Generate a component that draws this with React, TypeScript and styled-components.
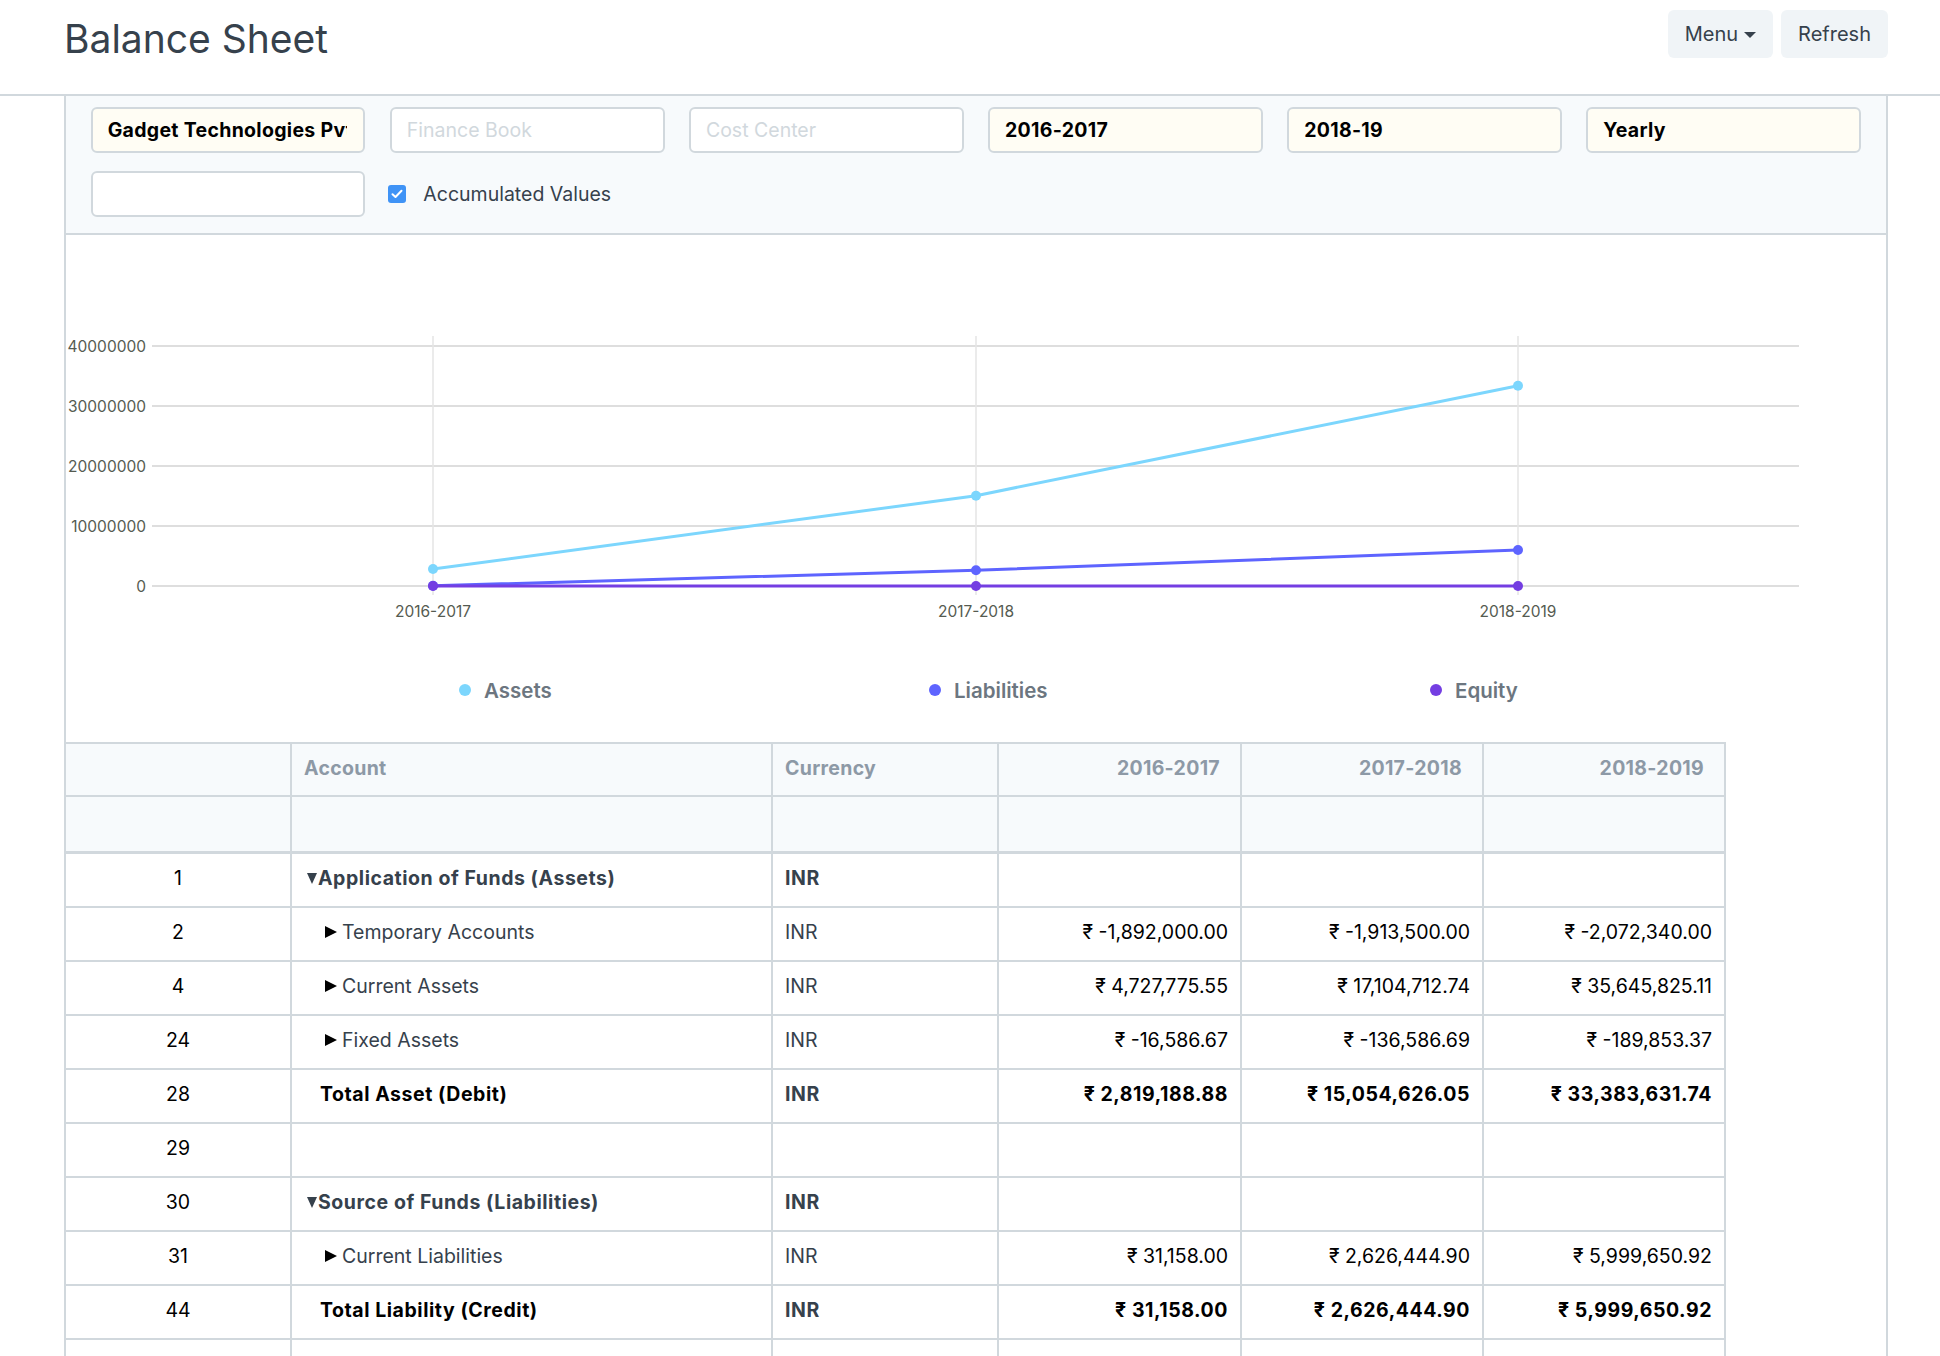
import React from "react";
import styled, { createGlobalStyle } from "styled-components";

const GlobalStyle = createGlobalStyle`
  html, body { margin: 0; padding: 0; background: #ffffff; overflow: hidden; }
  body { font-family: Inter, "Noto Sans", "DejaVu Sans", sans-serif; color: #36414c; }
  * { box-sizing: border-box; }
`;

const Page = styled.div`
  width: 1940px;
`;

const PageHead = styled.header`
  height: 96px;
  border-bottom: 2px solid #d1d8dd;
`;

const HeadInner = styled.div`
  margin-left: 64px;
  width: 1824px;
  display: flex;
  justify-content: space-between;
  align-items: flex-start;
`;

const Title = styled.h1`
  margin: 14.5px 0 0 0;
  font-size: 39px;
  line-height: 48px;
  font-weight: 400;
  color: #36414c;
`;

const Actions = styled.div`
  display: flex;
  gap: 8px;
  margin-top: 10px;
`;

const Button = styled.button`
  height: 48px;
  padding: 0 17px;
  border: none;
  border-radius: 6px;
  background: #f0f4f7;
  color: #36414c;
  font-family: Inter, "Noto Sans", sans-serif;
  font-size: 20px;
  display: inline-flex;
  align-items: center;
  gap: 6px;
`;

const Caret = styled.span`
  width: 0;
  height: 0;
  border-left: 6.5px solid transparent;
  border-right: 6.5px solid transparent;
  border-top: 6px solid #36414c;
  margin-top: 2px;
`;

const Main = styled.main`
  margin-left: 64px;
  width: 1824px;
  min-height: 1400px;
  border-left: 2px solid #d1d8dd;
  border-right: 2px solid #d1d8dd;
`;

const FilterArea = styled.section`
  background: #f7fafc;
  border-bottom: 2px solid #d1d8dd;
  padding: 11px 25px 16px 24.7px;
  display: grid;
  grid-template-columns: repeat(6, 1fr);
  column-gap: 24.4px;
  row-gap: 18px;
`;

const Input = styled.input<{ $filled?: boolean }>`
  width: 100%;
  height: 46px;
  border: 2px solid #d1d8dd;
  border-radius: 6px;
  background: ${(p) => (p.$filled ? "#fffdf4" : "#ffffff")};
  padding: 0 16px 0 15px;
  font-family: Inter, "Noto Sans", sans-serif;
  font-size: 19.5px;
  font-weight: 700;
  letter-spacing: 0.3px;
  color: #000000;
  outline: none;
  &::placeholder {
    color: #d1d8dd;
    font-weight: 400;
    letter-spacing: 0;
  }
`;

const CheckField = styled.label`
  display: flex;
  align-items: center;
  gap: 17px;
  margin-left: -1.5px;
  font-size: 19.5px;
  color: #36414c;
`;

const CheckBox = styled.span`
  width: 18px;
  height: 18px;
  border-radius: 3px;
  background: #3f93f6;
  display: inline-flex;
  align-items: center;
  justify-content: center;
`;

const ChartSection = styled.section`
  height: 507px;
`;

const ChartSvg = styled.svg`
  display: block;
  overflow: visible;
`;

const AxisText = styled.text`
  font-family: Inter, "Noto Sans", sans-serif;
  font-size: 15.5px;
  fill: #555b51;
`;

const LegendText = styled.text`
  font-family: Inter, "Noto Sans", sans-serif;
  font-size: 20.5px;
  font-weight: 600;
  fill: #6c7680;
`;

const Table = styled.div`
  width: 1660px;
  border-top: 2px solid #d1d8dd;
`;

const Row = styled.div<{ $head?: boolean; $filter?: boolean }>`
  display: grid;
  grid-template-columns: 226px 481px 226px 243px 242px 242px;
  height: ${(p) => (p.$head ? "53px" : p.$filter ? "57px" : "54px")};
  background: ${(p) => (p.$head || p.$filter ? "#f7fafc" : "#ffffff")};
  border-bottom: ${(p) => (p.$filter ? "3px" : "2px")} solid #d1d8dd;
`;

const Cell = styled.div<{ $align?: "left" | "right" | "center"; $bold?: boolean; $dark?: boolean; $head?: boolean }>`
  border-right: 2px solid #d1d8dd;
  display: flex;
  align-items: center;
  justify-content: ${(p) => (p.$align === "right" ? "flex-end" : p.$align === "center" ? "center" : "flex-start")};
  padding: ${(p) => (p.$head && p.$align === "right" ? "0 20px 4px 12px" : "0 12px 4px 12px")};
  font-size: 19.5px;
  font-weight: ${(p) => (p.$bold || p.$head ? 700 : 400)};
  letter-spacing: ${(p) => (p.$bold ? "0.55px" : p.$head ? "0.3px" : "0")};
  color: ${(p) => (p.$head ? "#8d99a6" : p.$dark ? "#000000" : "#36414c")};
  white-space: nowrap;
  overflow: hidden;
`;

const AccountText = styled.span<{ $indent: number }>`
  display: inline-flex;
  align-items: center;
  margin-left: ${(p) => p.$indent}px;
`;

const ToggleDown = styled.span`
  width: 0;
  height: 0;
  border-left: 5px solid transparent;
  border-right: 5px solid transparent;
  border-top: 11px solid #36414c;
  margin: 0 1px 0 3px;
`;

const ToggleRight = styled.span`
  width: 0;
  height: 0;
  border-top: 6.5px solid transparent;
  border-bottom: 6.5px solid transparent;
  border-left: 12px solid #000000;
  margin: 0 5px 0 5px;
`;

type Line = {
  idx: number;
  name: string;
  level: number;
  toggle?: "open" | "closed";
  total?: boolean;
  currency?: string;
  values?: string[];
};

const ROWS: Line[] = [
  { idx: 1, name: "Application of Funds (Assets)", level: 0, toggle: "open", currency: "INR" },
  { idx: 2, name: "Temporary Accounts", level: 1, toggle: "closed", currency: "INR", values: ["₹ -1,892,000.00", "₹ -1,913,500.00", "₹ -2,072,340.00"] },
  { idx: 4, name: "Current Assets", level: 1, toggle: "closed", currency: "INR", values: ["₹ 4,727,775.55", "₹ 17,104,712.74", "₹ 35,645,825.11"] },
  { idx: 24, name: "Fixed Assets", level: 1, toggle: "closed", currency: "INR", values: ["₹ -16,586.67", "₹ -136,586.69", "₹ -189,853.37"] },
  { idx: 28, name: "Total Asset (Debit)", level: 1, total: true, currency: "INR", values: ["₹ 2,819,188.88", "₹ 15,054,626.05", "₹ 33,383,631.74"] },
  { idx: 29, name: "", level: 0 },
  { idx: 30, name: "Source of Funds (Liabilities)", level: 0, toggle: "open", currency: "INR" },
  { idx: 31, name: "Current Liabilities", level: 1, toggle: "closed", currency: "INR", values: ["₹ 31,158.00", "₹ 2,626,444.90", "₹ 5,999,650.92"] },
  { idx: 44, name: "Total Liability (Credit)", level: 1, total: true, currency: "INR", values: ["₹ 31,158.00", "₹ 2,626,444.90", "₹ 5,999,650.92"] },
  { idx: 45, name: "", level: 0 },
  { idx: 46, name: "Source of Funds (Equity)", level: 0, toggle: "open", currency: "INR" },
];

const PERIODS = ["2016-2017", "2017-2018", "2018-2019"];
const XS = [367, 910, 1452];
const yFor = (v: number) => 351 - (v / 1e7) * 60;

const SERIES = [
  { name: "Assets", color: "#7cd6fd", values: [2819188.88, 15054626.05, 33383631.74], lx: 399 },
  { name: "Liabilities", color: "#5e64ff", values: [31158, 2626444.9, 5999650.92], lx: 869 },
  { name: "Equity", color: "#743ee2", values: [0, 0, 0], lx: 1370 },
];

const Chart: React.FC = () => (
  <ChartSvg width={1820} height={507} viewBox="0 0 1820 507">
    {[40000000, 30000000, 20000000, 10000000, 0].map((t) => (
      <g key={t}>
        <line x1={86} x2={1733} y1={yFor(t)} y2={yFor(t)} stroke="#dedede" strokeWidth={2} />
        <AxisText x={80} y={yFor(t) + 5.5} textAnchor="end">
          {t}
        </AxisText>
      </g>
    ))}
    {XS.map((x, i) => (
      <g key={x}>
        <line x1={x} x2={x} y1={101} y2={360} stroke="#e4e4e4" strokeWidth={1.5} />
        <AxisText x={x} y={382} textAnchor="middle">
          {PERIODS[i]}
        </AxisText>
      </g>
    ))}
    {SERIES.map((s) => (
      <g key={s.name}>
        <polyline
          points={s.values.map((v, i) => `${XS[i]},${yFor(v)}`).join(" ")}
          fill="none"
          stroke={s.color}
          strokeWidth={3}
        />
        {s.values.map((v, i) => (
          <circle key={i} cx={XS[i]} cy={yFor(v)} r={5} fill={s.color} />
        ))}
      </g>
    ))}
    {SERIES.map((s) => (
      <g key={s.name + "-legend"}>
        <circle cx={s.lx} cy={455} r={6} fill={s.color} />
        <LegendText x={s.lx + 19} y={462.5}>
          {s.name}
        </LegendText>
      </g>
    ))}
  </ChartSvg>
);

const Check = () => (
  <svg width="12" height="10" viewBox="0 0 12 10">
    <path d="M1.5 5.2 L4.5 8 L10.5 1.8" fill="none" stroke="#ffffff" strokeWidth="2" strokeLinecap="round" strokeLinejoin="round" />
  </svg>
);

export default function App() {
  return (
    <Page>
      <GlobalStyle />
      <PageHead>
        <HeadInner>
          <Title>Balance Sheet</Title>
          <Actions>
            <Button>
              Menu <Caret />
            </Button>
            <Button>Refresh</Button>
          </Actions>
        </HeadInner>
      </PageHead>
      <Main>
        <FilterArea>
          <Input $filled readOnly value="Gadget Technologies Pvt. Ltd." />
          <Input readOnly placeholder="Finance Book" />
          <Input readOnly placeholder="Cost Center" />
          <Input $filled readOnly value="2016-2017" />
          <Input $filled readOnly value="2018-19" />
          <Input $filled readOnly value="Yearly" />
          <Input readOnly />
          <CheckField>
            <CheckBox>
              <Check />
            </CheckBox>
            Accumulated Values
          </CheckField>
        </FilterArea>
        <ChartSection>
          <Chart />
        </ChartSection>
        <Table>
          <Row $head>
            <Cell $head />
            <Cell $head>Account</Cell>
            <Cell $head>Currency</Cell>
            {PERIODS.map((p) => (
              <Cell $head $align="right" key={p}>
                {p}
              </Cell>
            ))}
          </Row>
          <Row $filter>
            <Cell />
            <Cell />
            <Cell />
            <Cell />
            <Cell />
            <Cell />
          </Row>
          {ROWS.map((r) => {
            const group = r.toggle === "open";
            return (
              <Row key={r.idx}>
                <Cell $align="center" $dark>
                  {r.idx}
                </Cell>
                <Cell $bold={group || r.total} $dark={r.total}>
                  {r.name && (
                    <AccountText $indent={r.level * 16}>
                      {r.toggle === "open" && <ToggleDown />}
                      {r.toggle === "closed" && <ToggleRight />}
                      {r.name}
                    </AccountText>
                  )}
                </Cell>
                <Cell $bold={group || r.total}>{r.currency}</Cell>
                {[0, 1, 2].map((i) => (
                  <Cell key={i} $align="right" $dark $bold={r.total}>
                    {r.values ? r.values[i] : ""}
                  </Cell>
                ))}
              </Row>
            );
          })}
        </Table>
      </Main>
    </Page>
  );
}
